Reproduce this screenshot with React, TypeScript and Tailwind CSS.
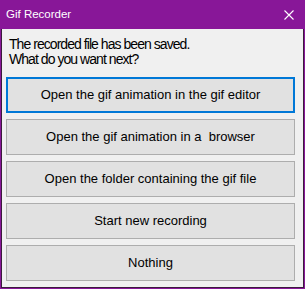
import React from "react"

const options = [
  "Open the gif animation in the gif editor",
  "Open the gif animation in a\u00a0 browser",
  "Open the folder containing the gif file",
  "Start new recording",
  "Nothing",
]

export default function App() {
  return (
    <div
      className="w-[305px] h-[289px] flex flex-col bg-[#881798] overflow-hidden"
      style={{ fontFamily: '"Liberation Sans", Arial, sans-serif' }}
    >
      {/* Title bar */}
      <div className="h-[29px] shrink-0 flex items-center justify-between pl-[6px] pr-[11px] text-white">
        <span className="text-[11.5px] leading-none">Gif Recorder</span>
        <svg width="10" height="10" viewBox="0 0 10 10" className="shrink-0">
          <path d="M0.5 0.5 L9.5 9.5 M9.5 0.5 L0.5 9.5" stroke="#ffffff" strokeWidth="1.1" fill="none" />
        </svg>
      </div>

      {/* Client area */}
      <div className="flex-1 ml-px mr-px mb-px border-l border-r border-b border-[#3b1b3d] bg-[#f0f0f0]">
        <div className="pt-[8px] pl-[7px] text-[14px] leading-[15px] tracking-[-0.95px] text-black">
          <p>The recorded file has been saved.</p>
          <p>What do you want next?</p>
        </div>

        <div className="mt-[10px] ml-[4px] w-[289px] flex flex-col gap-[6px]">
          {options.map((label, i) => (
            <button
              key={label}
              className={
                i === 0
                  ? "h-[36px] w-full bg-[#e1e1e1] border-2 border-[#0078d7] text-[13px] text-black"
                  : "h-[36px] w-full bg-[#e1e1e1] border border-[#adadad] text-[13px] text-black"
              }
            >
              {label}
            </button>
          ))}
        </div>
      </div>
    </div>
  )
}
